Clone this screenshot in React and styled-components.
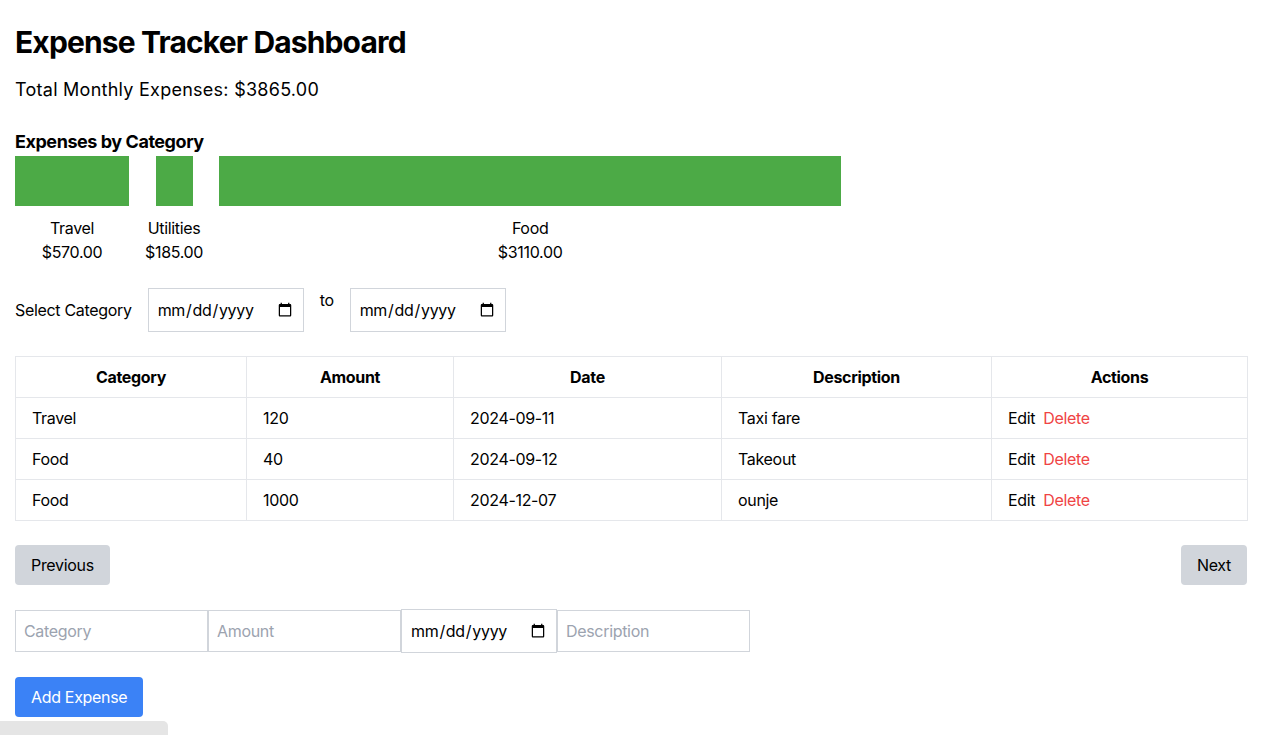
import React from "react";
import styled, { createGlobalStyle } from "styled-components";

const GlobalStyle = createGlobalStyle`
  * { box-sizing: border-box; }
  html, body {
    margin: 0;
    padding: 0;
    background: #ffffff;
    font-family: Inter, "Liberation Sans", sans-serif;
    letter-spacing: -0.32px;
    color: #000000;
  }
  input, button { letter-spacing: inherit; }
`;

const expenses = [
  { category: "Travel", amount: 120, date: "2024-09-11", description: "Taxi fare" },
  { category: "Food", amount: 40, date: "2024-09-12", description: "Takeout" },
  { category: "Food", amount: 1000, date: "2024-12-07", description: "ounje" },
];

const totals = [
  { name: "Travel", amount: 570 },
  { name: "Utilities", amount: 185 },
  { name: "Food", amount: 3110 },
];

const grandTotal = totals.reduce((s, t) => s + t.amount, 0);
const chartScale = 773;

const Page = styled.div`
  width: 1232px;
  margin-left: 15px;
  padding-top: 24px;
  padding-bottom: 24px;
`;

const Title = styled.h1`
  margin: 0 0 16px;
  font-size: 30px;
  line-height: 36px;
  font-weight: 700;
  letter-spacing: -0.85px;
`;

const Total = styled.p`
  margin: 0 0 24px;
  font-size: 18px;
  line-height: 28px;
  letter-spacing: 0.26px;
`;

const SectionTitle = styled.h2`
  margin: 0;
  font-size: 18px;
  line-height: 28px;
  font-weight: 700;
  letter-spacing: -0.45px;
`;

const Chart = styled.div`
  display: flex;
  gap: 16px;
  margin-bottom: 24px;
`;

const ChartColumn = styled.div`
  display: flex;
  flex-direction: column;
  align-items: center;
`;

const Bar = styled.div`
  height: 50px;
  background: #4caa46;
  margin-bottom: 10px;
`;

const ChartLabel = styled.span`
  font-size: 16px;
  line-height: 24px;
  text-align: center;
`;

const FilterRow = styled.div`
  display: flex;
  align-items: center;
  gap: 16px;
  margin-bottom: 24px;
`;

const FilterLabel = styled.span`
  font-size: 16px;
  line-height: 24px;
`;

const ToLabel = styled.span`
  align-self: flex-start;
  font-size: 16px;
  line-height: 24px;
`;

const DateInput = styled.input`
  width: 156px;
  height: 44px;
  padding: 8px;
  border: 1px solid #d1d5db;
  border-radius: 0;
  font-family: Inter, "Liberation Sans", sans-serif;
  font-size: 16px;
  color: #000;
  background: #fff;
  outline: none;
`;

const Table = styled.table`
  width: 1232px;
  border-collapse: collapse;
  table-layout: fixed;
  margin-bottom: 24px;
`;

const Th = styled.th`
  border: 1px solid #e5e7eb;
  padding: 8px 16px;
  font-size: 16px;
  line-height: 24px;
  font-weight: 700;
  text-align: center;
`;

const Td = styled.td`
  border: 1px solid #e5e7eb;
  padding: 8px 16px;
  font-size: 16px;
  line-height: 24px;
  text-align: left;
`;

const ActionLink = styled.button`
  border: none;
  background: none;
  padding: 0;
  margin-right: 8px;
  font-family: inherit;
  font-size: 16px;
  line-height: 24px;
  color: ${(p) => (p.$danger ? "#ef4444" : "#000")};
  cursor: pointer;
`;

const Pager = styled.div`
  display: flex;
  justify-content: space-between;
  margin-bottom: 24px;
`;

const Button = styled.button`
  height: 40px;
  padding: 8px 16px;
  border: none;
  border-radius: 4px;
  font-family: inherit;
  font-size: 16px;
  line-height: 24px;
  background: ${(p) => (p.$primary ? "#3b82f6" : "#d1d5db")};
  color: ${(p) => (p.$primary ? "#fff" : "#000")};
  cursor: pointer;
`;

const FormRow = styled.div`
  display: flex;
  align-items: center;
  margin-bottom: 24px;
`;

const TextInput = styled.input`
  width: 193px;
  height: 42px;
  padding: 8px;
  border: 1px solid #d1d5db;
  border-radius: 0;
  font-family: Inter, "Liberation Sans", sans-serif;
  font-size: 16px;
  color: #000;
  outline: none;
  &::placeholder { color: #9ca3af; }
`;

const CornerTab = styled.div`
  position: fixed;
  left: 0;
  bottom: 0;
  width: 168px;
  height: 14px;
  background: #e5e5e5;
  border-top-right-radius: 5px;
`;

export default function App() {
  return (
    <>
      <GlobalStyle />
      <Page>
        <Title>Expense Tracker Dashboard</Title>
        <Total>Total Monthly Expenses: ${grandTotal.toFixed(2)}</Total>

        <SectionTitle>Expenses by Category</SectionTitle>
        <Chart>
          {totals.map((t) => (
            <ChartColumn key={t.name}>
              <Bar style={{ width: Math.round((t.amount / grandTotal) * chartScale) }} />
              <ChartLabel>{t.name}</ChartLabel>
              <ChartLabel>${t.amount.toFixed(2)}</ChartLabel>
            </ChartColumn>
          ))}
        </Chart>

        <FilterRow>
          <FilterLabel>Select Category</FilterLabel>
          <DateInput type="date" />
          <ToLabel>to</ToLabel>
          <DateInput type="date" />
        </FilterRow>

        <Table>
          <colgroup>
            <col style={{ width: 231 }} />
            <col style={{ width: 207 }} />
            <col style={{ width: 268 }} />
            <col style={{ width: 270 }} />
            <col style={{ width: 256 }} />
          </colgroup>
          <thead>
            <tr>
              <Th>Category</Th>
              <Th>Amount</Th>
              <Th>Date</Th>
              <Th>Description</Th>
              <Th>Actions</Th>
            </tr>
          </thead>
          <tbody>
            {expenses.map((e, i) => (
              <tr key={i}>
                <Td>{e.category}</Td>
                <Td>{e.amount}</Td>
                <Td>{e.date}</Td>
                <Td>{e.description}</Td>
                <Td>
                  <ActionLink>Edit</ActionLink>
                  <ActionLink $danger>Delete</ActionLink>
                </Td>
              </tr>
            ))}
          </tbody>
        </Table>

        <Pager>
          <Button>Previous</Button>
          <Button>Next</Button>
        </Pager>

        <FormRow>
          <TextInput placeholder="Category" />
          <TextInput placeholder="Amount" />
          <DateInput type="date" />
          <TextInput placeholder="Description" />
        </FormRow>

        <Button $primary>Add Expense</Button>
      </Page>
      <CornerTab />
    </>
  );
}
